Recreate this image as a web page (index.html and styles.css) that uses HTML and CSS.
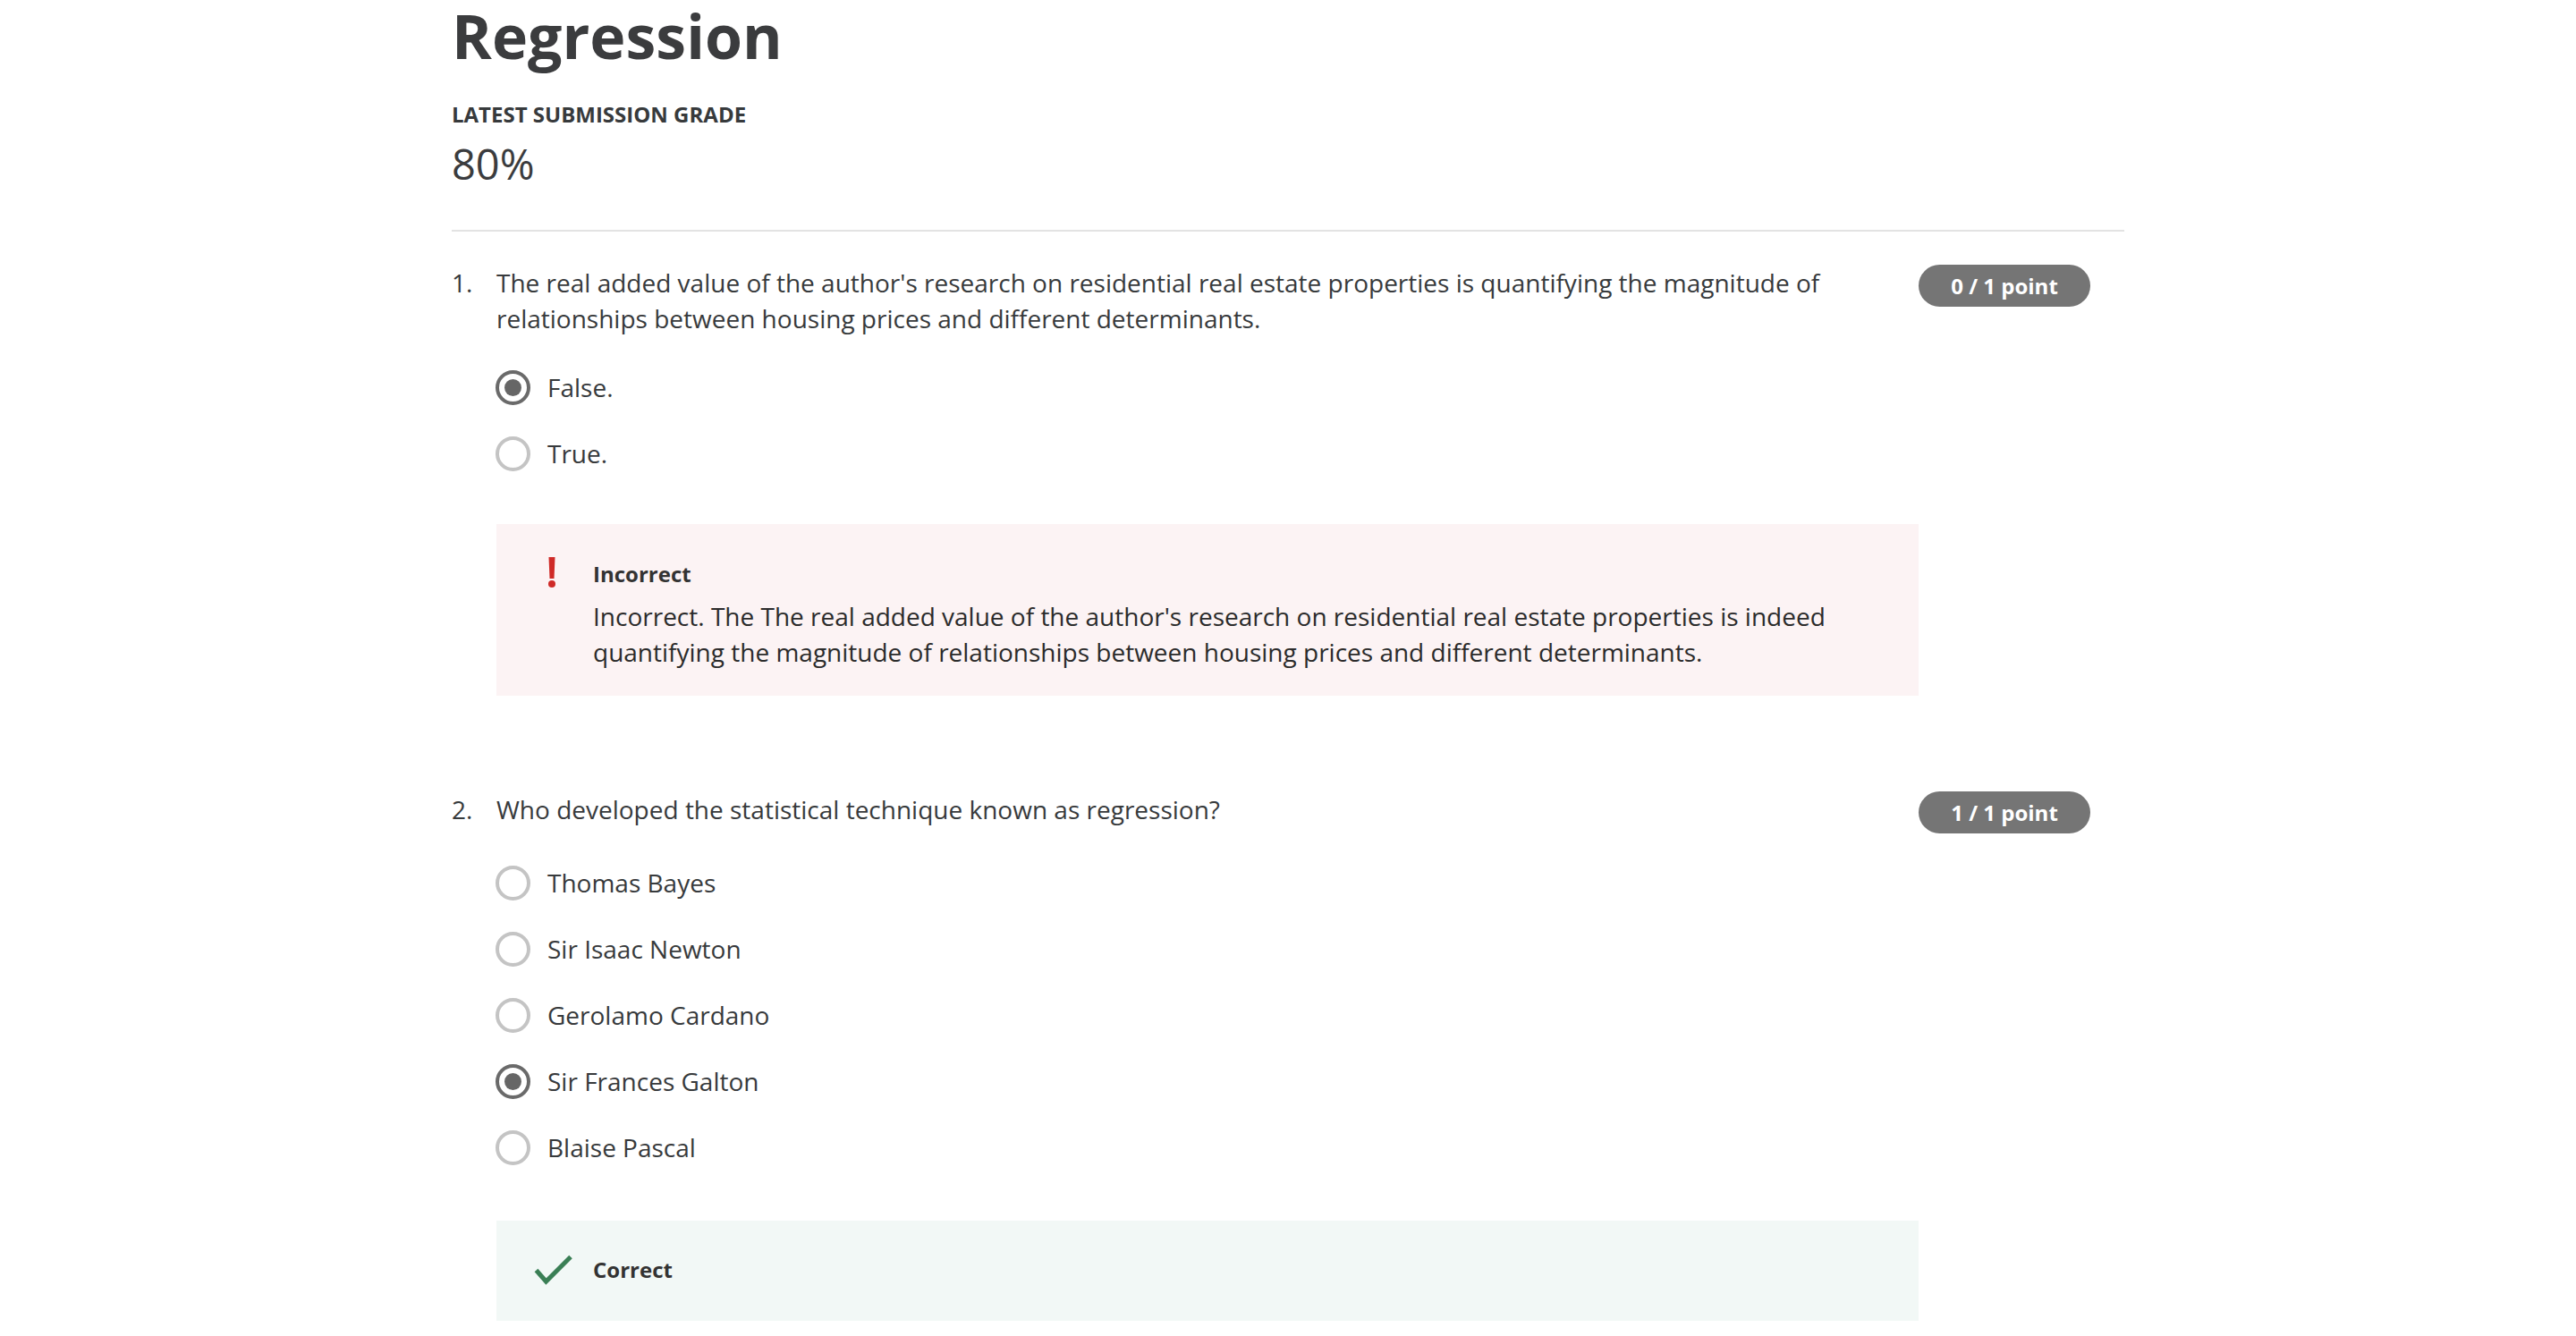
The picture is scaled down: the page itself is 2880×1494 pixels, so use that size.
FILE: index.html
```html
<!DOCTYPE html>
<html lang="en">
<head>
<meta charset="utf-8">
<title>Regression</title>
<link rel="stylesheet" href="styles.css">
</head>
<body>
<main class="page">
  <h1 class="title">Regression</h1>
  <div class="grade-label">LATEST SUBMISSION GRADE</div>
  <div class="grade-value">80%</div>
  <hr class="divider">

  <section class="question">
    <div class="q-body">
      <div class="q-num">1.</div>
      <div class="q-content">
        <p class="q-prompt">The real added value of the author's research on residential real estate properties is quantifying the magnitude of relationships between housing prices and different determinants.</p>
        <ul class="options">
          <li class="option"><span class="radio radio--checked"></span><span class="option-label">False.</span></li>
          <li class="option"><span class="radio"></span><span class="option-label">True.</span></li>
        </ul>
        <div class="feedback feedback--incorrect">
          <div class="feedback-icon">
            <svg width="44" height="40" viewBox="0 0 44 40"><polygon points="16.5,1 23.5,1 22.5,25 17.5,25" fill="#cf2a27"/><circle cx="20" cy="31" r="4" fill="#cf2a27"/></svg>
          </div>
          <div class="feedback-main">
            <div class="feedback-title">Incorrect</div>
            <p class="feedback-text">Incorrect. The The real added value of the author's research on residential real estate properties is indeed quantifying the magnitude of relationships between housing prices and different determinants.</p>
          </div>
        </div>
      </div>
    </div>
    <div class="q-side"><span class="badge">0 / 1 point</span></div>
  </section>

  <section class="question">
    <div class="q-body">
      <div class="q-num">2.</div>
      <div class="q-content">
        <p class="q-prompt">Who developed the statistical technique known as regression?</p>
        <ul class="options options--spaced">
          <li class="option"><span class="radio"></span><span class="option-label">Thomas Bayes</span></li>
          <li class="option"><span class="radio"></span><span class="option-label">Sir Isaac Newton</span></li>
          <li class="option"><span class="radio"></span><span class="option-label">Gerolamo Cardano</span></li>
          <li class="option"><span class="radio radio--checked"></span><span class="option-label">Sir Frances Galton</span></li>
          <li class="option"><span class="radio"></span><span class="option-label">Blaise Pascal</span></li>
        </ul>
        <div class="feedback feedback--correct">
          <div class="feedback-icon">
            <svg width="44" height="40" viewBox="0 0 44 40"><path d="M2.5 20.5 L13.5 33 L41 5.5" fill="none" stroke="#3a7f55" stroke-width="5"/></svg>
          </div>
          <div class="feedback-main">
            <div class="feedback-title">Correct</div>
          </div>
        </div>
      </div>
    </div>
    <div class="q-side"><span class="badge">1 / 1 point</span></div>
  </section>
</main>
</body>
</html>
```
FILE: styles.css
```css
* { box-sizing: border-box; }

html, body {
  margin: 0;
  padding: 0;
  background: #ffffff;
}

body {
  font-family: "Open Sans", "Liberation Sans", sans-serif;
  color: #373a3c;
}

.page {
  width: 1870px;
  margin: 0 auto;
}

.title {
  margin: 0;
  font-size: 68px;
  line-height: 80px;
  font-weight: 700;
  color: #3b3c3e;
}

.grade-label {
  margin-top: 32px;
  font-size: 24px;
  line-height: 32px;
  font-weight: 700;
  color: #373a3c;
}

.grade-value {
  margin-top: 7px;
  font-size: 47px;
  line-height: 64px;
  font-weight: 400;
  color: #3b3c3e;
}

.divider {
  margin: 42px 0 0;
  border: 0;
  height: 2px;
  background: #e3e3e3;
}

.question {
  display: flex;
  align-items: flex-start;
  margin-top: 37px;
}

.question + .question {
  margin-top: 107px;
}

.q-body {
  flex: 1;
  display: flex;
}

.q-num {
  width: 50px;
  flex: none;
  font-size: 28px;
  line-height: 40px;
}

.q-content {
  flex: 1;
}

.q-prompt {
  margin: 0;
  font-size: 28px;
  line-height: 40px;
}

.q-side {
  width: 230px;
  flex: none;
  padding-right: 38px;
}

.badge {
  display: flex;
  align-items: center;
  justify-content: center;
  width: 192px;
  height: 47px;
  border-radius: 24px;
  background: #757575;
  color: #ffffff;
  font-size: 24px;
  font-weight: 700;
}

.options {
  list-style: none;
  margin: 37px 0 0;
  padding: 0;
  display: flex;
  flex-direction: column;
  gap: 34px;
}

.options--spaced {
  margin-top: 42px;
}

.option {
  display: flex;
  align-items: center;
  gap: 19px;
  height: 40px;
}

.radio {
  width: 39px;
  height: 39px;
  flex: none;
  margin-left: -1px;
  border: 4px solid #c4c4c4;
  border-radius: 50%;
  display: flex;
  align-items: center;
  justify-content: center;
}

.radio--checked {
  border-color: #6a6a6a;
}

.radio--checked::after {
  content: "";
  width: 19px;
  height: 19px;
  border-radius: 50%;
  background: #666666;
}

.option-label {
  font-size: 28px;
  line-height: 40px;
}

.feedback {
  display: flex;
  align-items: flex-start;
  margin-top: 59px;
  padding: 40px 48px 40px 42px;
}

.feedback--incorrect {
  background: #fcf3f4;
  padding-bottom: 29px;
}

.feedback--correct {
  background: #f2f8f6;
  margin-top: 62px;
  padding-top: 39px;
  padding-bottom: 37px;
}

.feedback-icon {
  width: 44px;
  height: 40px;
  flex: none;
  margin-right: 22px;
  margin-top: -4px;
}

.feedback-icon svg {
  display: block;
}

.feedback-main {
  flex: 1;
}

.feedback-title {
  font-size: 24px;
  line-height: 32px;
  font-weight: 700;
  color: #333333;
}

.feedback-text {
  margin: 11px 0 0;
  font-size: 28px;
  line-height: 40px;
  color: #2b2b2b;
}
```
